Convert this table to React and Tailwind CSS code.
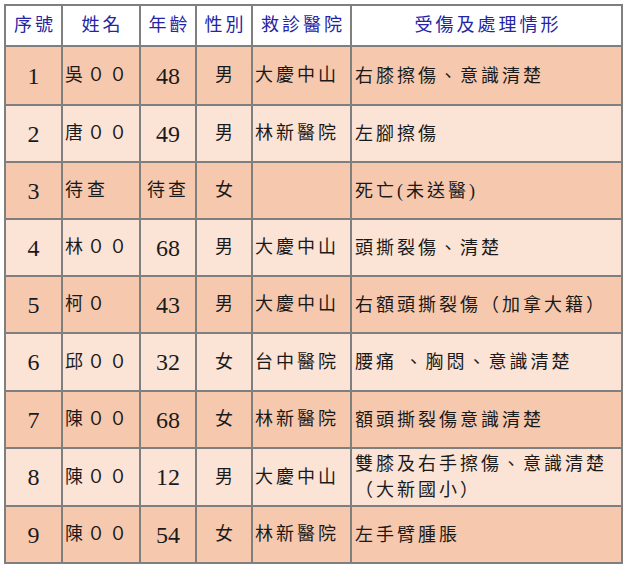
const HEAD = ['序號', '姓名', '年齡', '性別', '救診醫院', '受傷及處理情形'];

const ROWS = [
  { no: '1', name: '吳００', age: '48', sex: '男', hosp: '大慶中山', desc: '右膝擦傷、意識清楚', h: 'h-[57px]' },
  { no: '2', name: '唐００', age: '49', sex: '男', hosp: '林新醫院', desc: '左腳擦傷', h: 'h-[55px]' },
  { no: '3', name: '待查', age: '待查', sex: '女', hosp: '', desc: '死亡(未送醫)', h: 'h-[55px]' },
  { no: '4', name: '林００', age: '68', sex: '男', hosp: '大慶中山', desc: '頭撕裂傷、清楚', h: 'h-[55px]' },
  { no: '5', name: '柯０', age: '43', sex: '男', hosp: '大慶中山', desc: '右額頭撕裂傷（加拿大籍）', h: 'h-[55px]' },
  { no: '6', name: '邱００', age: '32', sex: '女', hosp: '台中醫院', desc: '腰痛 、胸悶、意識清楚', h: 'h-[56px]' },
  { no: '7', name: '陳００', age: '68', sex: '女', hosp: '林新醫院', desc: '額頭撕裂傷意識清楚', h: 'h-[55px]' },
  { no: '8', name: '陳００', age: '12', sex: '男', hosp: '大慶中山', desc: '雙膝及右手擦傷、意識清楚（大新國小）', h: 'h-[56px]' },
  { no: '9', name: '陳００', age: '54', sex: '女', hosp: '林新醫院', desc: '左手臂腫脹', h: 'h-[55px]' },
];

const font = { fontFamily: '"Liberation Serif", "Noto Sans CJK TC", serif' };

function Cell({ children, bg, align = 'center', h }) {
  return (
    <div
      className={`${bg} ${h} flex items-center ${align === 'center' ? 'justify-center' : 'justify-start pl-[2px]'} overflow-hidden`}
    >
      {children}
    </div>
  );
}

export default function App() {
  return (
    <div className="bg-white w-[628px] h-[569px] pt-[4px] pl-[4px]" style={font}>
      <div className="w-[619px] bg-[#7f7f7f] p-[2px] grid grid-cols-[55px_76px_54px_54px_97px_269px] gap-[2px]">
        {HEAD.map((t) => (
          <div key={t} className="bg-white h-[39px] flex items-center justify-center text-[18px] tracking-[3px] text-[#2424a4]">
            <span className="pl-[3px]">{t}</span>
          </div>
        ))}

        {ROWS.map((r, i) => {
          const bg = i % 2 === 0 ? 'bg-[#f6c9ae]' : 'bg-[#fbe3d6]';
          return [
            <Cell key={r.no + 'a'} bg={bg} h={r.h}>
              <span className="text-[24px] text-[#1a1a1a]">{r.no}</span>
            </Cell>,
            <Cell key={r.no + 'b'} bg={bg} h={r.h} align="left">
              <span className="text-[18px] tracking-[4px] text-[#1a1a1a]">{r.name}</span>
            </Cell>,
            <Cell key={r.no + 'c'} bg={bg} h={r.h}>
              <span className={r.age === '待查' ? 'text-[18px] tracking-[3px] text-[#1a1a1a]' : 'text-[24px] text-[#1a1a1a]'}>{r.age}</span>
            </Cell>,
            <Cell key={r.no + 'd'} bg={bg} h={r.h}>
              <span className="text-[18px] text-[#1a1a1a]">{r.sex}</span>
            </Cell>,
            <Cell key={r.no + 'e'} bg={bg} h={r.h} align="left">
              <span className="text-[18px] tracking-[3px] text-[#1a1a1a]">{r.hosp}</span>
            </Cell>,
            <Cell key={r.no + 'f'} bg={bg} h={r.h} align="left">
              <span className="text-[18px] tracking-[3px] leading-[26px] text-[#1a1a1a] pl-[1px] pr-[8px]">{r.desc}</span>
            </Cell>,
          ];
        })}
      </div>
    </div>
  );
}
